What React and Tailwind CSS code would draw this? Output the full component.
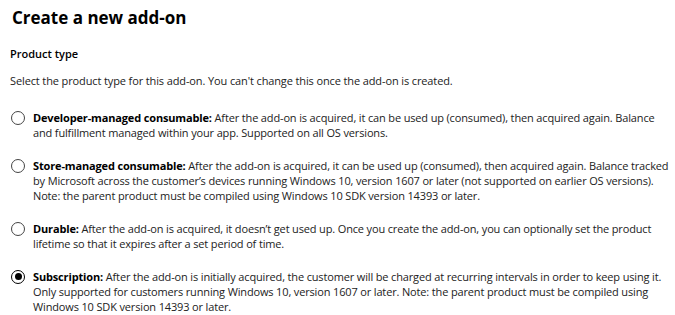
import React from "react";

const options = [
	{
		id: "dev",
		title: "Developer-managed consumable:",
		lines: [
			" After the add-on is acquired, it can be used up (consumed), then acquired again. Balance",
			"and fulfillment managed within your app. Supported on all OS versions.",
		],
	},
	{
		id: "store",
		title: "Store-managed consumable:",
		lines: [
			" After the add-on is acquired, it can be used up (consumed), then acquired again. Balance tracked",
			"by Microsoft across the customer\u2019s devices running Windows 10, version 1607 or later (not supported on earlier OS versions).",
			"Note: the parent product must be compiled using Windows 10 SDK version 14393 or later.",
		],
	},
	{
		id: "durable",
		title: "Durable:",
		lines: [
			" After the add-on is acquired, it doesn\u2019t get used up. Once you create the add-on, you can optionally set the product",
			"lifetime so that it expires after a set period of time.",
		],
	},
	{
		id: "sub",
		title: "Subscription:",
		lines: [
			" After the add-on is initially acquired, the customer will be charged at recurring intervals in order to keep using it.",
			"Only supported for customers running Windows 10, version 1607 or later. Note: the parent product must be compiled using",
			"Windows 10 SDK version 14393 or later.",
		],
	},
];

const Radio = ({ checked }) => (
	<span
		className={
			checked
				? "mt-[0.5px] flex h-[14px] w-[14px] shrink-0 items-center justify-center rounded-full border-[1.5px] border-black"
				: "mt-[0.5px] flex h-[14px] w-[14px] shrink-0 items-center justify-center rounded-full border border-[#444]"
		}
	>
		{checked && <span className="h-[7px] w-[7px] rounded-full bg-black" />}
	</span>
);

const App = () => {
	const selected = "sub";

	return (
		<div
			className="h-[315px] w-[675px] overflow-hidden bg-white pl-[10px] pt-[5px] text-[#222]"
			style={{ fontFamily: '"Open Sans", sans-serif' }}
		>
			<h1 className="pl-[2px] text-[17px] font-bold leading-[26px] text-black">Create a new add-on</h1>
			<h2 className="mt-[15px] text-[11px] font-semibold leading-[15px] text-black">Product type</h2>
			<p className="mt-[12px] text-[11px] leading-[15px] tracking-[-0.12px]">
				Select the product type for this add-on. You can't change this once the add-on is created.
			</p>

			<div className="mt-[22px] flex flex-col gap-[18px]">
				{options.map((opt) => (
					<label key={opt.id} className="flex gap-[8px] pl-[1px]">
						<Radio checked={selected === opt.id} />
						<div className="whitespace-nowrap text-[11px] leading-[15px] tracking-[-0.15px]">
							<span className="font-bold text-black">{opt.title}</span>
							{opt.lines.map((line, i) => (
								<React.Fragment key={i}>
									{i > 0 && <br />}
									{line}
								</React.Fragment>
							))}
						</div>
					</label>
				))}
			</div>
		</div>
	);
};

export default App;
